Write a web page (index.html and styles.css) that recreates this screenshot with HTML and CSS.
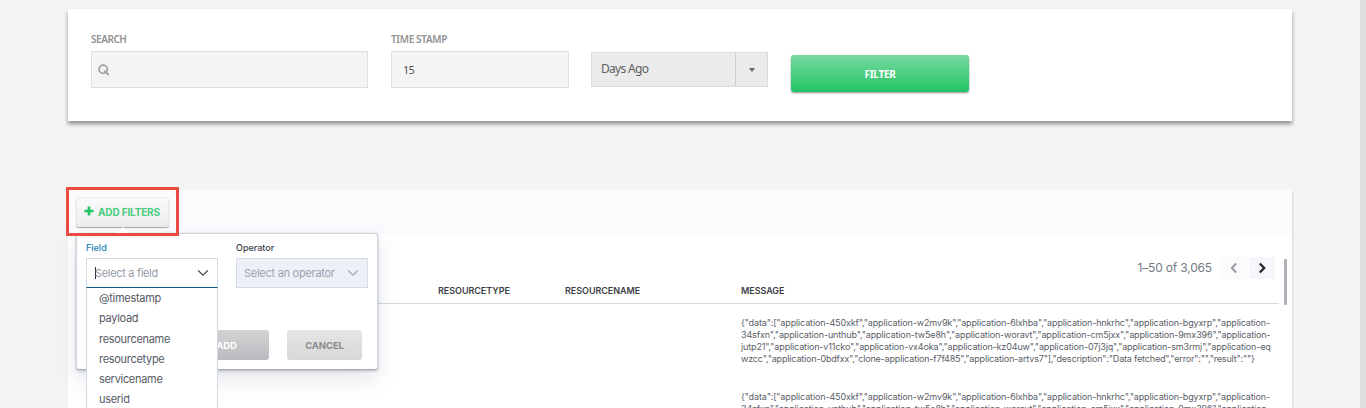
FILE: index.html
```html
<!DOCTYPE html>
<html lang="en">
<head>
<meta charset="utf-8">
<title>Logs</title>
<link rel="stylesheet" href="styles.css">
</head>
<body>
<div class="page">
  <main class="content">
    <section class="search-card">
      <div class="group search-group">
        <label class="label"><span class="label-search">SEARCH</span></label>
        <div class="input search-input">
          <svg class="search-icon" width="12" height="12" viewBox="0 0 12 12"><circle cx="5.2" cy="5.2" r="4.1"/><path d="M6.3 6.6 10.8 11"/></svg>
        </div>
      </div>
      <div class="group time-group">
        <label class="label"><span class="label-time">TIME STAMP</span></label>
        <div class="input time-input">15</div>
      </div>
      <div class="unit-select"><span class="unit-text">Days Ago</span><span class="unit-arrow"><i class="caret"></i></span></div>
      <button class="filter-button">FILTER</button>
    </section>

    <section class="table-card">
      <div class="toolbar">
        <button class="add-filters"><svg width="10" height="10" viewBox="0 0 10 10"><path d="M5 .5v9M.5 5h9"/></svg><span>ADD FILTERS</span></button>
      </div>
      <div class="table-body">
        <div class="table-main">
          <div class="pager">
            <span class="range">1–50 of 3,065</span>
            <span class="page-button prev"><svg width="8" height="12" viewBox="0 0 8 12"><path d="M6.2 1.5 1.8 6l4.4 4.5"/></svg></span>
            <span class="page-button next"><svg width="8" height="12" viewBox="0 0 8 12"><path d="M1.8 1.5 6.2 6l-4.4 4.5"/></svg></span>
          </div>
          <div class="row head"><span></span><span class="th-type">RESOURCETYPE</span><span class="th-name">RESOURCENAME</span><span class="th-message">MESSAGE</span></div>
          <div class="row"><p class="message"><span class="l1">{"data":["application-450xkf","application-w2mv9k","application-6lxhba","application-hnkrhc","application-bgyxrp","application-</span><span class="l2">34sfxn","application-unthub","application-tw5e8h","application-woravt","application-cm5jxx","application-9mx396","application-</span><span class="l3">jutp21","application-v11cko","application-vx4oka","application-kz04uw","application-07j3jq","application-sm3rmj","application-eq</span><span class="l4">wzcc","application-0bdfxx","clone-application-f7f485","application-artvs7"],"description":"Data fetched","error":"","result":""}</span></p></div>
          <div class="row"><p class="message"><span class="l1">{"data":["application-450xkf","application-w2mv9k","application-6lxhba","application-hnkrhc","application-bgyxrp","application-</span><span class="l2">34sfxn","application-unthub","application-tw5e8h","application-woravt","application-cm5jxx","application-9mx396","application-</span></p></div>
        </div>
        <div class="inner-scroll"></div>
      </div>

      <div class="popover">
        <i class="popover-arrow"></i>
        <div class="fields">
          <div class="field">
            <span class="field-label active">Field</span>
            <div class="combo focused"><i class="cursor"></i><span class="ph-field">Select a field</span><svg class="chevron" width="12" height="8" viewBox="0 0 12 8"><path d="M1.2 1.5 6 6.2l4.8-4.7"/></svg></div>
          </div>
          <div class="field">
            <span class="field-label">Operator</span>
            <div class="combo disabled"><span class="ph-operator">Select an operator</span><svg class="chevron" width="12" height="8" viewBox="0 0 12 8"><path d="M1.2 1.5 6 6.2l4.8-4.7"/></svg></div>
          </div>
        </div>
        <div class="actions"><button class="action add">ADD</button><button class="action cancel">CANCEL</button></div>
        <div class="options"><span>@timestamp</span><span>payload</span><span>resourcename</span><span>resourcetype</span><span>servicename</span><span>userid</span></div>
      </div>
      <div class="highlight"></div>
    </section>
  </main>
  <div class="page-scroll"></div>
</div>
</body>
</html>
```
FILE: styles.css
```css
* { box-sizing: border-box; }
body { margin: 0; background: #f4f4f4; font-family: Inter, "Open Sans", sans-serif; overflow: hidden; }
button { border: 0; padding: 0; font-family: inherit; }
.page { display: flex; height: 408px; overflow: hidden; }
.content { flex: 1; padding: 9px 68px 0; display: flex; flex-direction: column; }
.page-scroll { width: 6px; background: #dfdfdf; }

.search-card { height: 112px; flex: none; padding: 23px 23px 0; background: #fff; display: flex; align-items: flex-start; box-shadow: 0 3px 4px rgba(0,0,0,.42); font-family: "Noto Sans", sans-serif; }
.search-group { width: 277px; margin-right: 23px; }
.time-group { width: 178px; margin-right: 22px; }
.label { display: block; height: 19px; line-height: 15px; font-size: 10px; font-weight: 600; color: #929292; white-space: nowrap; }
.label-search { letter-spacing: -.45px; }
.label-time { letter-spacing: -.35px; }
.input { height: 37px; background: #f4f4f4; border: 1px solid #dfdfdf; display: flex; align-items: center; font-size: 11px; color: #555; }
.search-input { padding-left: 6px; }
.search-icon { fill: none; stroke: #a2a2a2; stroke-width: 1.8; }
.time-input { padding-left: 11px; letter-spacing: -.8px; }
.unit-select { width: 177px; height: 35px; margin-top: 20px; background: #ebebeb; border: 1px solid #dcdcdc; display: flex; font-size: 12px; color: #616161; }
.unit-text { flex: 1; padding-left: 9px; line-height: 32px; letter-spacing: -.7px; }
.unit-arrow { width: 32px; border-left: 1px solid #ccc; display: grid; place-items: center; }
.caret { border: 3px solid transparent; border-top: 4px solid #666; border-bottom: 0; }
.filter-button { width: 178px; height: 37px; margin: 23px 0 0 23px; border-radius: 3px; background: linear-gradient(#78dba0, #22c364); box-shadow: 0 1px 2px rgba(0,0,0,.45); color: #fff; font-size: 10px; font-weight: 700; letter-spacing: -.3px; }

.table-card { position: relative; margin-top: 69px; flex: 1; min-height: 0; display: flex; flex-direction: column; background: #fff; box-shadow: 1px 2px 2px rgba(0,0,0,.13); }
.toolbar { height: 44px; flex: none; padding: 7px 8px; background: #fafbfd; }
.add-filters { width: 93px; height: 30px; border-radius: 3px; border: 1px solid #e8e9ea; background: linear-gradient(#fafafa, #ededed); box-shadow: 0 1px 1px #a6a6a6; display: flex; align-items: center; padding-left: 7px; gap: 4px; color: #48cd7e; font-size: 10px; font-weight: 700; letter-spacing: -.15px; white-space: nowrap; }
.add-filters svg { fill: none; stroke: #22c364; stroke-width: 2.7; margin-top: -3px; }
.table-body { flex: 1; display: flex; min-height: 0; }
.table-main { width: 1199px; margin-left: 12px; }
.pager { height: 44px; padding: 23px 4px 0 0; display: flex; justify-content: flex-end; align-items: flex-start; }
.range { font-size: 12px; line-height: 22px; color: #747985; margin-right: 7px; letter-spacing: -.18px; }
.page-button { width: 26px; height: 22px; background: #fafbfc; display: grid; place-items: center; margin-left: 2px; }
.page-button svg { fill: none; stroke: #999ba0; stroke-width: 2; }
.next { background: #f5f7fa; }
.next svg { stroke: #25272c; stroke-width: 2.3; }
.row { height: 74px; display: grid; grid-template-columns: 358px 127px 176px 538px; padding-top: 13px; }
.head { height: 26px; padding-top: 6px; border-bottom: 1px solid #d1dbe5; font-size: 9px; line-height: 13px; font-weight: 600; color: #3b3e46; letter-spacing: -.05px; }
.message { grid-column: 4; margin: 0; font-size: 9px; line-height: 12px; color: #5a5e68; white-space: nowrap; letter-spacing: -.14px; }
.message span { display: block; }
.message .l4 { letter-spacing: -.165px; }
.inner-scroll { width: 3px; height: 46px; margin: 25px 0 0 5px; border-radius: 1px; background: #afb2b8; }

.popover { position: absolute; left: 8px; top: 43px; width: 302px; height: 137px; padding: 9px 9px; background: #fff; border: 1px solid #d0d4dc; border-bottom-color: #a7abb8; border-radius: 3px; box-shadow: 0 1px 3px rgba(70,75,100,.35), 0 9px 22px rgba(85,95,130,.15); }
.popover-arrow { position: absolute; left: 39px; top: -7px; border: 7px solid transparent; border-top: 0; border-bottom-color: #fff; }
.fields { display: flex; gap: 18px; }
.field { width: 132px; }
.field-label { display: block; height: 15px; line-height: 10px; font-size: 9px; font-weight: 500; color: #3d4048; }
.active { color: #2280b8; }
.combo { height: 30px; border: 1px solid #d6dce7; display: flex; align-items: center; padding: 0 8px 0 7px; font-size: 11px; color: #959ba7; white-space: nowrap; letter-spacing: -.27px; }
.ph-field { letter-spacing: -.32px; }
.focused { padding-left: 8px; border-bottom: 1px solid #125786; }
.cursor { width: 1px; height: 12px; margin-right: -1px; background: #30323a; }
.disabled { background: #edf1f7; color: #99a1af; }
.chevron { margin-left: auto; fill: none; stroke: #454950; stroke-width: 1.2; }
.disabled .chevron { stroke: #9ca6b4; }
.actions { display: flex; justify-content: flex-end; gap: 18px; margin: 42px 6px 0 0; }
.action { height: 30px; border-radius: 3px; font-size: 9.5px; font-weight: 700; letter-spacing: -.1px; }
.add { width: 85px; color: #fff; background: linear-gradient(#d3d3d3, #babbc0); }
.cancel { width: 75px; color: #8b8b8b; background: linear-gradient(#e5e5e5, #d8d8d8); }
.options { position: absolute; left: 9px; top: 54px; width: 132px; height: 120px; padding: 0 12px; background: #fff; border: 1px solid #cfd6e4; border-top: 0; border-bottom: 0; display: flex; flex-direction: column; overflow: hidden; }
.options span { flex: none; height: 20.3px; line-height: 20px; font-size: 11px; color: #555963; letter-spacing: -.3px; }
.options span:last-child { height: 18px; }
.highlight { position: absolute; left: -2px; top: -3px; width: 113px; height: 49px; border: 3px solid #e94b43; }
```
